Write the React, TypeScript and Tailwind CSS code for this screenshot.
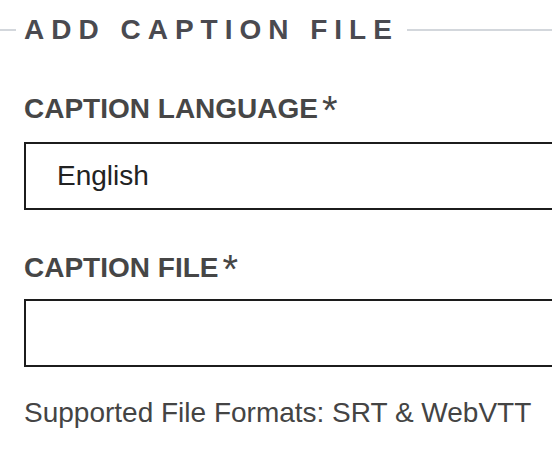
export default function App() {
  return (
    <div className="w-[552px] h-[454px] overflow-hidden bg-white [font-family:Liberation_Sans,Arial,sans-serif]">
      {/* Legend row */}
      <div className="flex items-center pt-4">
        <div className="w-4 h-[2px] bg-[#d3d7dc]"></div>
        <span className="px-2 text-[28px] leading-none font-bold tracking-[7px] text-[#4a4a50]">ADD CAPTION FILE</span>
        <div className="flex-1 h-[2px] bg-[#d3d7dc]"></div>
      </div>

      <div className="pl-6">
        <label className="mt-[51px] h-7 flex items-start text-[#464646]">
          <span className="text-[28px] leading-none font-bold">CAPTION LANGUAGE</span>
          <span className="relative -top-[5px] ml-1 h-7 text-[40px] leading-none">*</span>
        </label>
        <div className="mt-[19px] w-[600px] h-[68px] border-2 border-[#1c1c1c] flex items-center pl-[31px] text-[28px] leading-none text-[#222]">
          English
        </div>

        <label className="mt-[44px] h-7 flex items-start text-[#464646]">
          <span className="text-[28px] leading-none font-bold">CAPTION FILE</span>
          <span className="relative -top-[5px] ml-1 h-7 text-[40px] leading-none">*</span>
        </label>
        <div className="mt-[17px] w-[600px] h-[68px] border-2 border-[#1c1c1c]"></div>

        <p className="mt-[32px] text-[28px] leading-none text-[#444]">Supported File Formats: SRT &amp; WebVTT</p>
      </div>
    </div>
  );
}
